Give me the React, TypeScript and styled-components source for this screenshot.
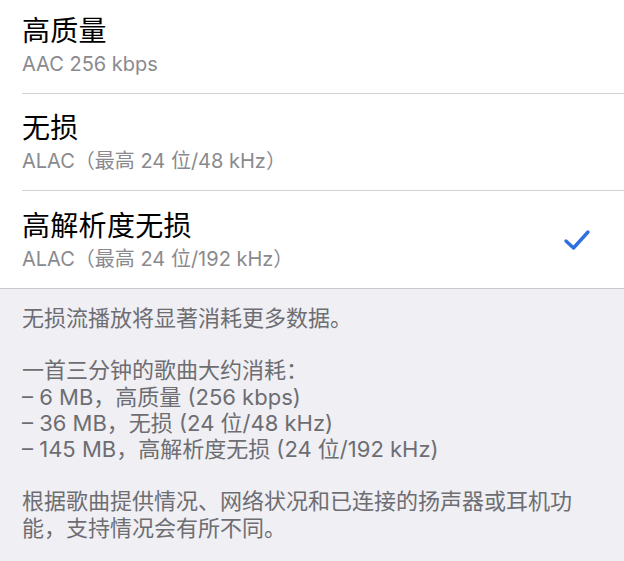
import React from "react";
import styled, { createGlobalStyle } from "styled-components";

const Global = createGlobalStyle`
  html, body { margin: 0; padding: 0; background: #efeff4; }
  body { font-family: "Inter", "Noto Sans CJK SC", sans-serif; -webkit-font-smoothing: antialiased; }
  #root { width: 624px; height: 561px; overflow: hidden; }
`;

const Page = styled.div`
  width: 624px;
  height: 561px;
  overflow: hidden;
  background: #efeff4;
`;

const List = styled.div`
  background: #ffffff;
  padding-left: 22px;
  margin-top: -3px;
  border-bottom: 1px solid #c8c7cc;
`;

const Row = styled.div<{ $last?: boolean }>`
  display: flex;
  align-items: center;
  height: 97px;
  box-sizing: border-box;
  padding-right: 33px;
  border-bottom: ${(p) => (p.$last ? "none" : "1px solid #d1d1d6")};
`;

const Texts = styled.div`
  flex: 1;
  display: flex;
  flex-direction: column;
  padding-top: 1px;
`;

const Title = styled.div`
  font-size: 28px;
  line-height: 34px;
  color: #000;
  letter-spacing: 0.3px;
`;

const Sub = styled.div`
  font-size: 20px;
  line-height: 26px;
  color: #8a8a8e;
  margin-top: 3px;
`;

const Check = styled.svg`
  width: 28px;
  height: 22px;
  margin-top: 0px;
`;

const Footer = styled.div`
  padding: 16px 42px 0 22px;
  color: #6d6d72;
  font-size: 22px;
  line-height: 26.3px;
`;

const Para = styled.p`
  margin: 0 0 26px 0;
`;

const Line = styled.div``;

const rows = [
  { title: "高质量", sub: "AAC 256 kbps" },
  { title: "无损", sub: "ALAC（最高 24 位/48 kHz）" },
  { title: "高解析度无损", sub: "ALAC（最高 24 位/192 kHz）", checked: true },
];

export default function App() {
  return (
    <Page>
      <Global />
      <List>
        {rows.map((r, i) => (
          <Row key={r.title} $last={i === rows.length - 1}>
            <Texts>
              <Title>{r.title}</Title>
              <Sub>{r.sub}</Sub>
            </Texts>
            {r.checked && (
              <Check viewBox="0 0 28 22">
                <path
                  d="M3 12 L10.5 19 L25 3"
                  fill="none"
                  stroke="#2f6fe0"
                  strokeWidth="3.4"
                  strokeLinecap="round"
                  strokeLinejoin="round"
                />
              </Check>
            )}
          </Row>
        ))}
      </List>
      <Footer>
        <Para>无损流播放将显著消耗更多数据。</Para>
        <Para>
          <Line>一首三分钟的歌曲大约消耗：</Line>
          <Line>– 6 MB，高质量 (256 kbps)</Line>
          <Line>– 36 MB，无损 (24 位/48 kHz)</Line>
          <Line>– 145 MB，高解析度无损 (24 位/192 kHz)</Line>
        </Para>
        <Para>根据歌曲提供情况、网络状况和已连接的扬声器或耳机功能，支持情况会有所不同。</Para>
      </Footer>
    </Page>
  );
}
